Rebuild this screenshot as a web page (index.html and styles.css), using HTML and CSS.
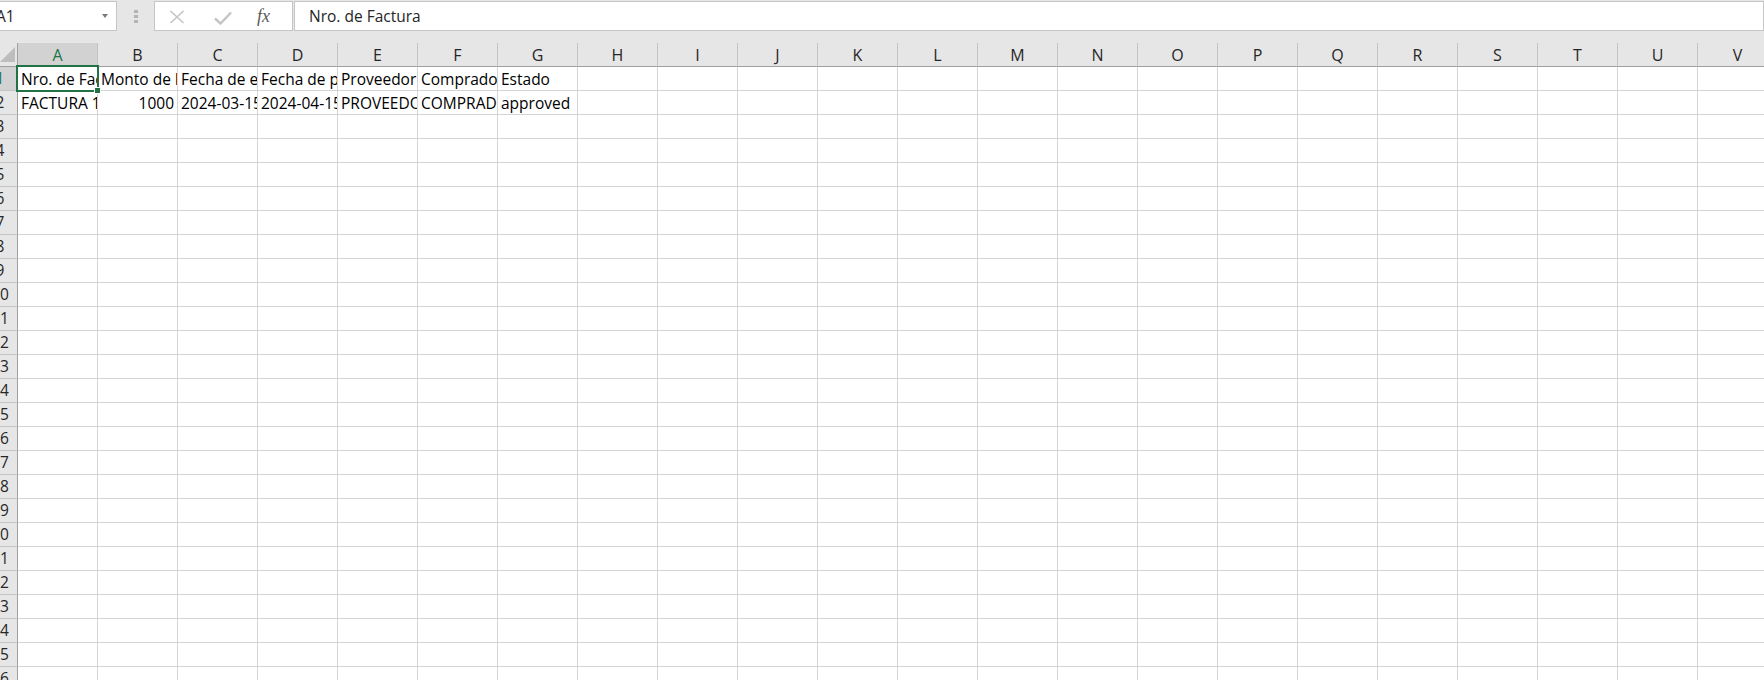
FILE: index.html
```html
<!DOCTYPE html>
<html lang="es">
  <head>
    <meta charset="UTF-8" />
    <meta name="viewport" content="width=device-width, initial-scale=1.0" />
    <title>Facturas.xlsx</title>
    <link rel="stylesheet" href="styles.css">
  </head>
  <body>
    <div class="app">
      <div class="toolbar">
        <div class="name-box">
          <span>A1</span>
          <span class="caret"></span>
        </div>
        <div class="grip"><i></i><i></i><i></i></div>
        <div class="fx-buttons">
          <svg class="icon-cancel" viewBox="0 0 16 14" width="16" height="14">
            <path d="M1.5 1L14.5 13M14.5 1L1.5 13" stroke="#c4c4c4" stroke-width="1.6" fill="none" />
          </svg>
          <svg class="icon-enter" viewBox="0 0 18 14" width="18" height="14">
            <path d="M1 7.5L6.5 12.5L17 1.5" stroke="#c4c4c4" stroke-width="2.4" fill="none" />
          </svg>
          <span class="fx">fx</span>
        </div>
        <div class="formula" id="formula">Nro. de Factura</div>
      </div>
      <div class="sheet" id="sheet"></div>
    </div>

    <script>
      const sheet = document.getElementById("sheet");
      const cols = "ABCDEFGHIJKLMNOPQRSTUV".split("");
      const rowCount = 27;

      // cell values, row by row
      const data = [
        ["Nro. de Factura", "Monto de Factura", "Fecha de emisión", "Fecha de pago", "Proveedor", "Comprador", "Estado"],
        ["FACTURA 1", 1000, "2024-03-15", "2024-04-15", "PROVEEDOR 1", "COMPRADOR 1", "approved"],
      ];

      function add(cls, text) {
        const el = document.createElement("div");
        el.className = cls;
        if (text !== undefined) el.textContent = text;
        sheet.appendChild(el);
        return el;
      }

      add("corner");
      cols.forEach((c, i) => add("col-head" + (i === 0 ? " active" : ""), c));

      for (let r = 1; r <= rowCount; r++) {
        add("row-head" + (r === 1 ? " active" : ""), r);
        cols.forEach((c, i) => {
          const row = data[r - 1] || [];
          const value = row[i];
          let cls = "cell";
          if (typeof value === "number") cls += " num";
          if (r === 1 && i === 0) cls += " sel";
          const cell = add(cls);
          const v = document.createElement("div");
          v.className = "v";
          if (value !== undefined) v.textContent = value;
          cell.appendChild(v);
        });
      }
    </script>
  </body>
</html>
```

FILE: styles.css
```css
body {
  margin: 0;
  font-family: "Open Sans", "Noto Sans", sans-serif;
  background: #ffffff;
  color: #000000;
  overflow: hidden;
}

.app {
  margin-left: -17px;
}

.toolbar {
  display: flex;
  align-items: flex-start;
  height: 43px;
  padding-top: 1px;
  box-sizing: border-box;
  background: #e6e6e6;
}

.name-box {
  width: 134px;
  height: 30px;
  box-sizing: border-box;
  border: 1px solid #c6c6c6;
  background: #ffffff;
  display: flex;
  align-items: center;
  justify-content: space-between;
  padding: 0 8px 0 12px;
  font-size: 15.5px;
  color: #262626;
}

.caret {
  width: 0;
  height: 0;
  margin-top: -1px;
  border-left: 3.5px solid transparent;
  border-right: 3.5px solid transparent;
  border-top: 4px solid #7b7b7b;
}

.grip {
  width: 37px;
  height: 30px;
  display: flex;
  flex-direction: column;
  align-items: center;
  justify-content: center;
  gap: 2px;
}

.grip i {
  width: 4px;
  height: 3px;
  background: #b4b4b4;
}

.fx-buttons {
  width: 139px;
  height: 30px;
  box-sizing: border-box;
  border: 1px solid #c6c6c6;
  background: #ffffff;
  display: flex;
  align-items: center;
  padding-left: 14px;
}

.icon-cancel {
  margin-top: 2px;
}

.icon-enter {
  margin-left: 29px;
  margin-top: 3px;
}

.fx {
  margin-left: 25px;
  font-family: "Liberation Serif", serif;
  font-style: italic;
  font-size: 18px;
  color: #5a5a5a;
  margin-top: 1px;
}

.formula {
  flex: 1;
  margin-left: 1px;
  height: 30px;
  box-sizing: border-box;
  border: 1px solid #c6c6c6;
  background: #ffffff;
  padding-left: 14px;
  font-size: 15.5px;
  line-height: 28px;
  color: #262626;
  white-space: nowrap;
}

.sheet {
  display: grid;
  grid-template-columns: 35px repeat(22, 80px);
  grid-auto-rows: 24px;
}

.corner {
  background: #e6e6e6;
  border-right: 1px solid #9f9f9f;
  border-bottom: 1px solid #9f9f9f;
  display: flex;
  justify-content: flex-end;
  align-items: flex-end;
  padding: 0 2px 4px 0;
}

.corner::after {
  content: "";
  width: 0;
  height: 0;
  border-left: 15px solid transparent;
  border-bottom: 15px solid #bdbdbd;
}

.col-head {
  background: #e6e6e6;
  border-right: 1px solid #c3c3c3;
  border-bottom: 1px solid #9f9f9f;
  text-align: center;
  font-size: 16px;
  padding-top: 2px;
  line-height: 21px;
  color: #262626;
}

.row-head {
  background: #e6e6e6;
  border-right: 1px solid #9f9f9f;
  border-bottom: 1px solid #c3c3c3;
  text-align: center;
  font-size: 15.5px;
  line-height: 23px;
  color: #262626;
}

.col-head.active,
.row-head.active {
  background: #d2d2d2;
  color: #217346;
}

.cell {
  position: relative;
  border-right: 1px solid #d4d4d4;
  border-bottom: 1px solid #d4d4d4;
  font-size: 15.5px;
}

.cell .v {
  overflow: hidden;
  white-space: nowrap;
  padding: 1px 3px 0;
  line-height: 22px;
}

.cell.num .v {
  text-align: right;
}

/* active cell outline and fill handle */
.cell.sel {
  z-index: 1;
}

.cell.sel::after {
  content: "";
  position: absolute;
  left: -2px;
  top: -2px;
  right: -2px;
  bottom: -2px;
  border: 2px solid #217346;
}

.cell.sel::before {
  content: "";
  position: absolute;
  right: -4px;
  bottom: -4px;
  width: 7px;
  height: 7px;
  box-sizing: border-box;
  background: #217346;
  border: 1px solid #ffffff;
  z-index: 1;
}

*,
*::before,
*::after {
  box-sizing: border-box;
}
```
